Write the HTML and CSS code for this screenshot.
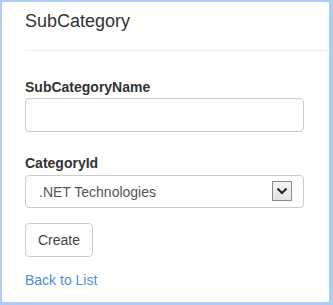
FILE: index.html
```html
<!DOCTYPE html>
<html lang="en">

<head>
    <meta charset="UTF-8">
    <meta name="viewport" content="width=device-width, initial-scale=1.0">
    <title>SubCategory</title>
    <link rel="stylesheet" href="styles.css">
</head>

<body>
    <div class="frame">
        <h2 class="title">SubCategory</h2>
        <hr class="rule">
        <form class="form">
            <div class="form-group">
                <label class="control-label" for="SubCategoryName">SubCategoryName</label>
                <input class="form-control" type="text" id="SubCategoryName">
            </div>
            <div class="form-group">
                <label class="control-label" for="CategoryId">CategoryId</label>
                <div class="select-wrap">
                    <select class="form-control select" id="CategoryId">
                        <option>.NET Technologies</option>
                    </select>
                    <span class="select-arrow">
                        <svg width="12" height="8" viewBox="0 0 12 8">
                            <path d="M1.5 1.5 L6 6 L10.5 1.5" fill="none" stroke="#222" stroke-width="2"/>
                        </svg>
                    </span>
                </div>
            </div>
            <button class="btn" type="button">Create</button>
        </form>
        <div class="back">
            <a href="#">Back to List</a>
        </div>
    </div>
</body>

</html>
```

FILE: styles.css
```css
html,
body {
    margin: 0;
    padding: 0;
    background: white;
}

body {
    font-family: "Liberation Sans", Arial, sans-serif;
    font-size: 14px;
    color: #333;
}

.frame {
    box-sizing: border-box;
    width: 333px;
    height: 305px;
    border-style: solid;
    border-color: #aecdf5;
    border-width: 2px 4px 3px 2px;
    padding: 9px 0 0 23px;
    overflow: hidden;
}

.title {
    margin: 0;
    font-size: 18px;
    font-weight: normal;
    line-height: 20px;
}

.rule {
    margin: 19px 0 0 0;
    border: 0;
    border-top: 1px solid #eee;
}

.form {
    width: 279px;
    padding-top: 29px;
}

.form-group {
    margin-bottom: 24px;
}

.form-group + .form-group {
    margin-bottom: 15px;
}

.control-label {
    display: block;
    font-weight: bold;
    font-size: 14px;
    line-height: 15px;
    margin-bottom: 3px;
}

.form-group + .form-group .control-label {
    margin-bottom: 4px;
}

.form-control {
    display: block;
    box-sizing: border-box;
    width: 100%;
    height: 34px;
    padding: 6px 12px;
    font-family: inherit;
    font-size: 14px;
    color: #555;
    background: white;
    border: 1px solid #ccc;
    border-radius: 4px;
    outline: none;
}

.select-wrap {
    position: relative;
}

.select {
    -webkit-appearance: none;
    appearance: none;
    height: 33px;
    padding-left: 13px;
}

.select-arrow {
    position: absolute;
    top: 6px;
    right: 12px;
    box-sizing: border-box;
    width: 20px;
    height: 20px;
    border: 1px solid #8a8a8a;
    background: linear-gradient(#f7f7f7, #e2e2e2);
    display: flex;
    align-items: center;
    justify-content: center;
    pointer-events: none;
}

.btn {
    display: block;
    box-sizing: border-box;
    height: 34px;
    padding: 0 12px;
    font-family: inherit;
    font-size: 14px;
    color: #444;
    background: white;
    border: 1px solid #ccc;
    border-radius: 4px;
}

.back {
    margin-top: 13px;
    line-height: 20px;
}

.back a {
    color: #4a90d6;
    text-decoration: none;
}
```
